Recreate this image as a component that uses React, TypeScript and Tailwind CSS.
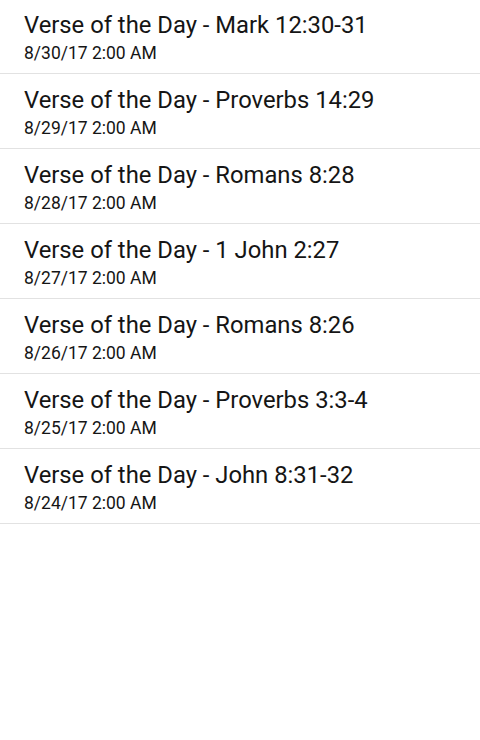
import React from "react";

const verses = [
  { title: "Verse of the Day - Mark 12:30-31", date: "8/30/17 2:00 AM" },
  { title: "Verse of the Day - Proverbs 14:29", date: "8/29/17 2:00 AM" },
  { title: "Verse of the Day - Romans 8:28", date: "8/28/17 2:00 AM" },
  { title: "Verse of the Day - 1 John 2:27", date: "8/27/17 2:00 AM" },
  { title: "Verse of the Day - Romans 8:26", date: "8/26/17 2:00 AM" },
  { title: "Verse of the Day - Proverbs 3:3-4", date: "8/25/17 2:00 AM" },
  { title: "Verse of the Day - John 8:31-32", date: "8/24/17 2:00 AM" },
];

export default function App() {
  return (
    <div
      className="w-[480px] h-[740px] bg-white overflow-hidden"
      style={{ fontFamily: "Roboto, 'Liberation Sans', sans-serif" }}
    >
      <ul className="-mt-[1px]">
        {verses.map((v) => (
          <li
            key={v.title}
            className="h-[75px] border-b border-[#e2e2e2] px-6 pt-[12px]"
          >
            <div className="text-[23.8px] leading-[29px] text-[#151515]">
              {v.title}
            </div>
            <div className="text-[17.5px] leading-[22px] text-[#151515] mt-[2px]">
              {v.date}
            </div>
          </li>
        ))}
      </ul>
    </div>
  );
}
